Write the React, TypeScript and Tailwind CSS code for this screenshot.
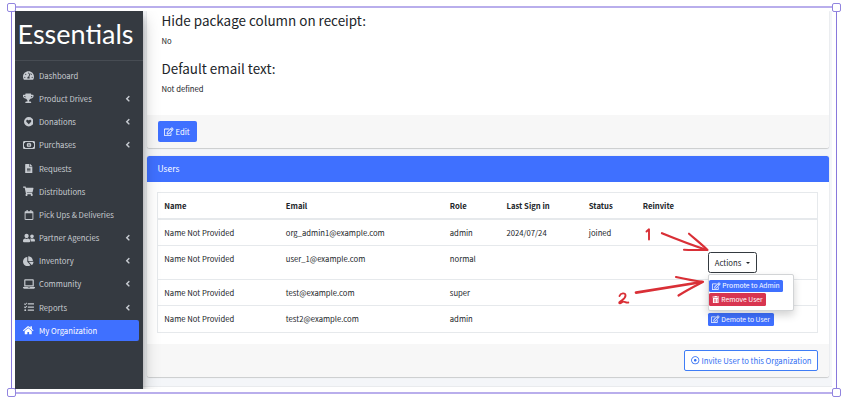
import type { ReactNode } from "react";
import {
  FaAngleLeft,
  FaChartPie,
  FaFileAlt,
  FaHome,
  FaLaptop,
  FaRegCalendar,
  FaRegDotCircle,
  FaRegEdit,
  FaShoppingCart,
  FaTachometerAlt,
  FaTasks,
  FaTrashAlt,
  FaTrophy,
  FaUserFriends,
} from "react-icons/fa";
import { FaRegMoneyBill1 } from "react-icons/fa6";

function HeartCircle() {
  return (
    <svg viewBox="0 0 20 20" width="9.5" height="9.5" fill="currentColor">
      <path
        fillRule="evenodd"
        d="M10 0a10 10 0 1 0 0 20a10 10 0 0 0 0-20zM10 15.2L5.4 10.4C4.2 9 4.4 7 5.8 6.2c1.500-.9 3-.3 4.200 1.200c1.200-1.500 2.700-2.100 4.200-1.200c1.400.8 1.600 2.800.4 4.200z"
      />
    </svg>
  );
}

type NavItem = { label: string; icon: ReactNode; arrow?: boolean; active?: boolean };

const nav: NavItem[] = [
  { label: "Dashboard", icon: <FaTachometerAlt size={11} /> },
  { label: "Product Drives", icon: <FaTrophy size={10.5} />, arrow: true },
  { label: "Donations", icon: <HeartCircle />, arrow: true },
  { label: "Purchases", icon: <FaRegMoneyBill1 size={12} />, arrow: true },
  { label: "Requests", icon: <FaFileAlt size={9.5} /> },
  { label: "Distributions", icon: <FaShoppingCart size={10.5} /> },
  { label: "Pick Ups & Deliveries", icon: <FaRegCalendar size={10} /> },
  { label: "Partner Agencies", icon: <FaUserFriends size={12} />, arrow: true },
  { label: "Inventory", icon: <FaChartPie size={10.5} />, arrow: true },
  { label: "Community", icon: <FaLaptop size={12} />, arrow: true },
  { label: "Reports", icon: <FaTasks size={10} />, arrow: true },
  { label: "My Organization", icon: <FaHome size={10.5} />, active: true },
];

function Sidebar() {
  return (
    <aside className="z-10 flex w-[128px] shrink-0 flex-col bg-[#353a41] shadow-[0_8px_16px_rgba(0,0,0,0.25),0_6px_6px_rgba(0,0,0,0.22)]">
      <div className="flex h-[50px] items-center border-b border-[#474c53] pl-[2px]">
        <svg width="118" height="34" className="block">
          <text
            x="0.5"
            y="25"
            textLength="116"
            lengthAdjust="spacingAndGlyphs"
            className="fill-white font-['Lato'] text-[26.500px]"
          >
            Essentials
          </text>
        </svg>
      </div>
      <nav className="flex flex-col gap-[1.900px] pt-[3.900px] text-[7.720px]">
        {nav.map((item) => (
          <div
            key={item.label}
            className={
              item.active
                ? "mr-[4.500px] flex h-[21.300px] items-center rounded-r-[2px] bg-[#3f70ff] pl-[7px] text-white"
                : "mr-[4.500px] flex h-[21.300px] items-center pl-[7px] text-[#c6cad0]"
            }
          >
            <span className="flex w-[13px] shrink-0 justify-center *:shrink-0">{item.icon}</span>
            <span className="ml-[4px] flex-1 whitespace-nowrap">{item.label}</span>
            {item.arrow && <FaAngleLeft size={9.5} className="mr-[6px]" />}
          </div>
        ))}
      </nav>
    </aside>
  );
}

const GRID =
  "grid grid-cols-[121.500px_164px_56.700px_82.300px_54px_65px_1fr] pl-[6.300px]";

function Row({ cells, className, action }: { cells: string[]; className: string; action?: ReactNode }) {
  return (
    <div className={`${GRID} border-b border-[#e6e9ec] pt-[7px] ${className}`}>
      {cells.map((c, i) => (
        <span key={i} className="whitespace-nowrap leading-[12px]">
          {c}
        </span>
      ))}
      <span>{action}</span>
    </div>
  );
}

function SmallButton({ label, icon, className }: { label: string; icon: ReactNode; className: string }) {
  return (
    <div
      className={`flex h-[12.500px] items-center gap-[1.500px] rounded-[1.500px] pl-[3.500px] text-[6.750px] leading-none whitespace-nowrap text-white *:shrink-0 ${className}`}
    >
      {icon}
      {label}
    </div>
  );
}

function ActionsMenu() {
  return (
    <div className="relative -mt-px">
      <div className="flex h-[21px] w-[49px] items-center rounded-[2.500px] border border-[#343a40] bg-white pl-[6px]">
        Actions
        <span className="ml-[5px] border-x-[2.500px] border-t-[2.500px] border-x-transparent border-t-[#212529]" />
      </div>
      <div className="absolute top-[22px] left-0 z-10 h-[37px] w-[86px] rounded-[2px] border border-[#d2d4d6] bg-white pt-[4.500px] shadow-[0_4px_9px_rgba(0,0,0,0.18)]">
        <SmallButton label="Promote to Admin" icon={<FaRegEdit size={8.5} />} className="w-[74.500px] bg-[#3f70ff]" />
        <SmallButton label="Remove User" icon={<FaTrashAlt size={7.5} />} className="mt-[1px] w-[57px] bg-[#d83550]" />
      </div>
    </div>
  );
}

function Main() {
  return (
    <main className="flex min-w-0 flex-1 flex-col bg-[#f4f6f9]">
      <section className="mr-[2.500px] ml-[4px] flex h-[137px] flex-col rounded-b-[2.500px] bg-white shadow-[0_0_1px_rgba(0,0,0,0.25),0_1px_1px_rgba(0,0,0,0.15)]">
        <div className="flex h-[104px] flex-col pl-[14.500px]">
          <h4 className="h-[23px] text-[13.450px] leading-[19px]">Hide package column on receipt:</h4>
          <p className="h-[25px] leading-[13px]">No</p>
          <h4 className="h-[23px] text-[13.450px] leading-[19px]">Default email text:</h4>
          <p className="leading-[13px]">Not defined</p>
        </div>
        <div className="flex h-[33px] items-center rounded-b-[2.500px] bg-[#f7f7f7] pl-[10.500px]">
          <div className="flex h-[20.500px] w-[39.500px] items-center gap-[2px] rounded-[2px] bg-[#3f70ff] pl-[6.500px] text-white *:shrink-0">
            <FaRegEdit size={9.5} />
            Edit
          </div>
        </div>
      </section>

      <section className="mt-[8px] mr-[2.500px] ml-[4px] flex h-[221px] flex-col rounded-[2.500px] bg-white shadow-[0_0_1px_rgba(0,0,0,0.25),0_1px_1px_rgba(0,0,0,0.15)]">
        <div className="flex h-[25.500px] items-center rounded-t-[2.500px] bg-[#3f70ff] pl-[10.500px] text-[8.500px] text-white">
          Users
        </div>
        <div className="flex h-[162.500px] flex-col pt-[10.500px] pr-[11px] pl-[10px]">
          <div className="flex flex-col border border-b-0 border-[#e6e9ec]">
            <Row
              className="h-[27px] border-b-2 font-bold"
              cells={["Name", "Email", "Role", "Last Sign in", "Status", "Reinvite"]}
            />
            <Row
              className="h-[26px]"
              cells={["Name Not Provided", "org_admin1@example.com", "admin", "2024/07/24", "joined", ""]}
            />
            <Row
              className="h-[34px]"
              cells={["Name Not Provided", "user_1@example.com", "normal", "", "", ""]}
              action={<ActionsMenu />}
            />
            <Row className="h-[26px]" cells={["Name Not Provided", "test@example.com", "super", "", "", ""]} />
            <Row
              className="h-[27px]"
              cells={["Name Not Provided", "test2@example.com", "admin", "", "", ""]}
              action={
                <SmallButton label="Demote to User" icon={<FaRegEdit size={8.5} />} className="w-[66px] bg-[#3f70ff]" />
              }
            />
          </div>
        </div>
        <div className="flex flex-1 items-center justify-end rounded-b-[2.500px] bg-[#f7f7f7] pr-[11px]">
          <div className="flex h-[21px] w-[134px] items-center gap-[2px] rounded-[2px] border border-[#3f7df6] bg-white pl-[6px] whitespace-nowrap text-[#2f6df2] *:shrink-0">
            <FaRegDotCircle size={8.5} />
            Invite User to this Organization
          </div>
        </div>
      </section>
      <div className="mt-auto h-[3px] border-t border-[#e9ebee] bg-white" />
    </main>
  );
}

function Annotations() {
  return (
    <svg
      className="pointer-events-none absolute inset-0 z-20"
      width="847"
      height="401"
      fill="none"
      stroke="#d92f36"
      strokeLinecap="round"
      strokeLinejoin="round"
    >
      <path d="M646.500 231.500L649 229.300V239.500" strokeWidth="1.900" />
      <path d="M662 233.200C675 238.500 690 244.500 707 250" strokeWidth="2.300" />
      <path d="M689 233.700C695 239 702 244.500 707.500 250C700 250 692 250 684 249.700" strokeWidth="2.100" />
      <path d="M619.500 296C620.500 293 625.500 292.300 625.500 295.500C625.500 299 621.500 300 619.300 302.500C618.800 304.500 622 302 623 301.700C625 301.300 626 303.300 628.300 302.500" strokeWidth="1.900" />
      <path d="M636 292.600C658 289 680 285.500 702 282" strokeWidth="2.700" />
      <path d="M676 277C685 279 694 280.700 703 281.800C695 286 686 290.500 678.500 295.500" strokeWidth="2.200" />
    </svg>
  );
}

const HANDLE = "absolute size-[9px] rounded-[2px] border border-[#9184df] bg-white";

function SelectionFrame() {
  return (
    <div className="pointer-events-none absolute top-[6px] left-[11px] h-[388px] w-[826px] border-x border-y-2 border-x-[#8878dc] border-y-[#b9aeec]">
      <span className={`${HANDLE} -top-[5px] -left-[5px]`} />
      <span className={`${HANDLE} -top-[5px] -right-[5px]`} />
      <span className={`${HANDLE} -bottom-[5px] -left-[5px]`} />
      <span className={`${HANDLE} -right-[5px] -bottom-[5px]`} />
    </div>
  );
}

export default function App() {
  return (
    <div className="relative h-[401px] w-[847px] overflow-hidden bg-white pt-[11px] pl-[15px] font-['Noto_Sans_CJK_SC',sans-serif] text-[7.700px] text-[#212529]">
      <div className="flex h-[378px] w-[816.500px] overflow-hidden">
        <Sidebar />
        <Main />
      </div>
      <SelectionFrame />
      <Annotations />
    </div>
  );
}
